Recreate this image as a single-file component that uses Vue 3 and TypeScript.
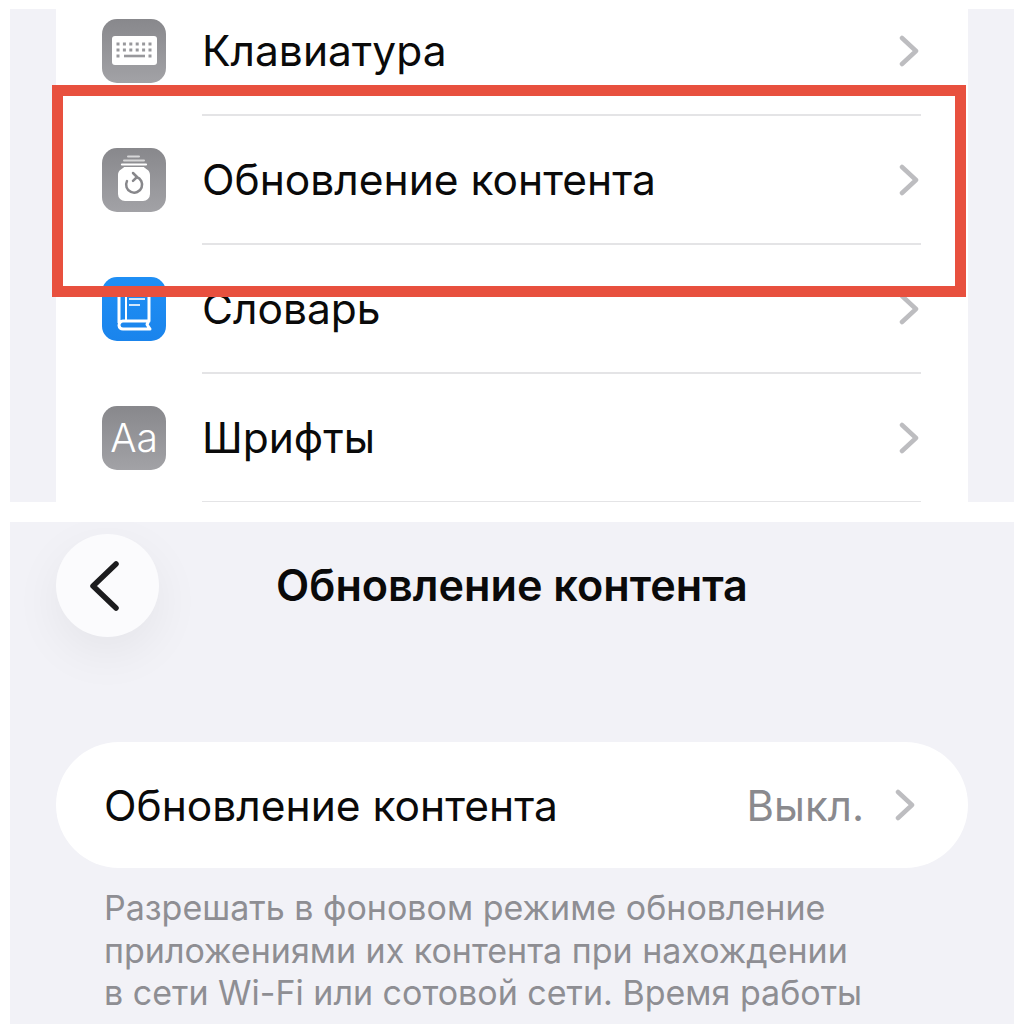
<script setup lang="ts">
const rows = [
  { name: 'Клавиатура', icon: 'keyboard' },
  { name: 'Обновление контента', icon: 'refresh' },
  { name: 'Словарь', icon: 'book' },
  { name: 'Шрифты', icon: 'fonts' },
]

const keyRows = [25, 31]
const keyCols = [16, 22.4, 28.8, 35.2, 41.6, 48]
</script>

<template>
  <div class="page">
    <section class="settings">
      <div class="panel">
        <div v-for="row in rows" :key="row.name" class="row">
          <div class="icon" :class="row.icon">
            <svg v-if="row.icon === 'keyboard'" viewBox="0 0 64 64" width="64" height="64">
              <rect x="10" y="17" width="45" height="29" rx="3" fill="#fff" />
              <g v-for="y in keyRows" :key="y">
                <rect v-for="x in keyCols" :key="x" :x="x - 1.5" :y="y - 1.5" width="3" height="3" fill="#98989c" />
              </g>
              <rect x="14.500" y="35.500" width="3" height="3" fill="#98989c" />
              <rect x="22" y="35.700" width="21" height="2.600" fill="#98989c" />
              <rect x="46.500" y="35.500" width="3" height="3" fill="#98989c" />
            </svg>
            <svg v-else-if="row.icon === 'refresh'" viewBox="0 0 64 64" width="64" height="64">
              <path d="M26 8.500h11M22 12.500h20" stroke="#fff" stroke-width="2" stroke-linecap="round" opacity="0.65" />
              <path d="M20 16.500h24" stroke="#fff" stroke-width="2.200" stroke-linecap="round" />
              <path d="M22 19h20c1 2 6 2.500 6 8V46a7 7 0 0 1-7 7H23a7 7 0 0 1-7-7V27c0-5.500 5-6 6-8z" fill="#fff" />
              <path d="M34.500 29a8 8 0 1 1-9.500 4" fill="none" stroke="#87878b" stroke-width="2.500" stroke-linecap="round" />
              <path d="M31 25l4 4-4 3.800" fill="none" stroke="#87878b" stroke-width="2.500" stroke-linecap="round" stroke-linejoin="round" />
            </svg>
            <svg v-else-if="row.icon === 'book'" viewBox="0 0 64 64" width="64" height="64">
              <path
                d="M17 46V16a4 4 0 0 1 4-4h23a3 3 0 0 1 3 3v29H21a4.500 4.500 0 0 0-4 4.500a4 4 0 0 0 4 3.500h27l-3-4.500 1.500-3"
                fill="none"
                stroke="#fff"
                stroke-width="3"
                stroke-linejoin="round"
              />
              <path d="M24 12v32" stroke="#fff" stroke-width="2" />
              <path d="M27 22h16M27 28h11" stroke="#fff" stroke-width="2.200" opacity="0.8" />
            </svg>
            <span v-else class="aa">Aa</span>
          </div>
          <div class="row-body">
            <span class="row-name">{{ row.name }}</span>
            <svg class="chevron" viewBox="0 0 20 32" width="20" height="32">
              <path d="M3 3l14 13L3 29" fill="none" stroke="#bdbdc0" stroke-width="4.500" stroke-linecap="round" stroke-linejoin="round" />
            </svg>
          </div>
        </div>
      </div>
      <div class="highlight"></div>
    </section>

    <section class="detail">
      <header class="detail-head">
        <button class="back">
          <svg viewBox="0 0 32 52" width="32" height="52">
            <path d="M27 4L4 26l23 22" fill="none" stroke="#1c1c1e" stroke-width="5.500" stroke-linecap="round" stroke-linejoin="round" />
          </svg>
        </button>
        <h1 class="title">Обновление контента</h1>
      </header>

      <div class="card">
        <span class="card-name">Обновление контента</span>
        <span class="card-value">Выкл.</span>
        <svg class="chevron" viewBox="0 0 20 32" width="20" height="32">
          <path d="M3 3l14 13L3 29" fill="none" stroke="#bdbdc0" stroke-width="4.500" stroke-linecap="round" stroke-linejoin="round" />
        </svg>
      </div>

      <p class="note">
        Разрешать в фоновом режиме обновление<br />
        приложениями их контента при нахождении<br />
        в сети Wi-Fi или сотовой сети. Время работы
      </p>
    </section>
  </div>
</template>

<style>
html,
body {
  background: #fff;
}
</style>

<style scoped>
.page {
  width: 1024px;
  height: 1024px;
  padding: 9px 10px 10px;
  box-sizing: border-box;
  overflow: hidden;
  font-family: Inter, "Liberation Sans", sans-serif;
  color: #0a0a0a;
}

.settings {
  position: relative;
  height: 493px;
  padding: 0 46px;
  background: #f2f2f7;
}

.panel {
  height: 100%;
  background: #fff;
  overflow: hidden;
}

.row {
  display: flex;
  align-items: stretch;
  height: 129px;
  padding-left: 46px;
}

.row:first-child {
  margin-top: -22px;
}

.icon {
  flex: none;
  width: 64px;
  height: 64px;
  align-self: center;
  margin-top: -2px;
  margin-right: 36px;
  border-radius: 15px;
  background: linear-gradient(#88888c, #a2a2a6);
  display: flex;
  align-items: center;
  justify-content: center;
}

.icon.book {
  background: linear-gradient(#1f8ff5, #1a84ec);
}

.aa {
  color: #fff;
  font-size: 39px;
  font-weight: 300;
}

.row-body {
  flex: 1;
  display: flex;
  align-items: center;
  justify-content: space-between;
  margin-right: 47px;
  padding-right: 2px;
  border-bottom: 2px solid #e4e4e6;
}

.row-name,
.card-name {
  font-size: 42.5px;
}

.chevron {
  flex: none;
}

.highlight {
  position: absolute;
  left: 42px;
  top: 76px;
  width: 914px;
  height: 212px;
  box-sizing: border-box;
  border: 11px solid #e8503e;
}

.detail {
  height: 492px;
  margin-top: 20px;
  padding: 12px 46px 0;
  background: #f2f2f7;
  overflow: hidden;
}

.detail-head {
  position: relative;
  display: flex;
  align-items: center;
  justify-content: center;
  height: 103px;
}

.back {
  position: absolute;
  left: 0;
  top: 0;
  width: 103px;
  height: 103px;
  padding: 0 6px 0 0;
  border: 0;
  border-radius: 50%;
  background: #fbfbfd;
  box-shadow: 0 16px 50px rgba(0, 0, 0, 0.06);
  display: flex;
  align-items: center;
  justify-content: center;
}

.title {
  margin: -2px 0 0;
  font-size: 43.200px;
  font-weight: 600;
}

.card {
  display: flex;
  align-items: center;
  height: 126px;
  margin-top: 105px;
  padding: 0 53px 0 48px;
  border-radius: 63px;
  background: #fff;
}

.card-name {
  flex: 1;
}

.card-value {
  margin-right: 31px;
  font-size: 42px;
  color: #8a8a8e;
}

.note {
  margin: 19px 0 0;
  padding-left: 48px;
  font-size: 34px;
  line-height: 42.5px;
  color: #8e8e93;
  white-space: nowrap;
}
</style>
